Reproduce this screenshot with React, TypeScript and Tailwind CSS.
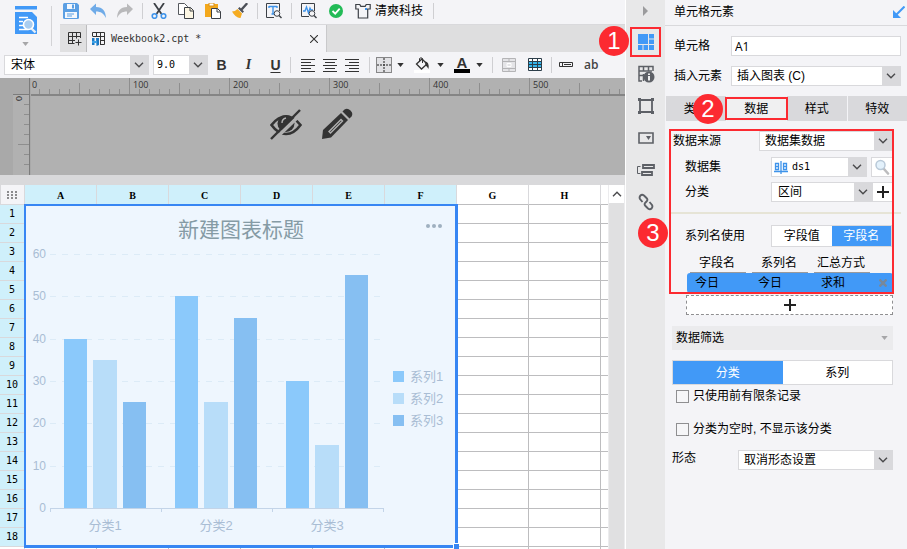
import type { ReactNode } from 'react'

const MONO = "[font-family:'DejaVu_Sans_Mono','Noto_Sans_CJK_SC',monospace]"

function Chevron({ className = '' }: { className?: string }) {
  return (
    <svg viewBox="0 0 10 6" className={`h-1.5 w-2.5 ${className}`} fill="none" stroke="#4a4a4c" strokeWidth="1.4">
      <path d="M1 .8 5 4.8 9 .8" />
    </svg>
  )
}

function Caret({ className = 'text-[#333]' }: { className?: string }) {
  return (
    <svg viewBox="0 0 8 5" className={`h-1 w-[7px] ${className}`} fill="currentColor">
      <path d="M0 0h8L4 5z" />
    </svg>
  )
}

type PickerProps = {
  label: string
  value: string
  className?: string
  selectClassName?: string
  icon?: ReactNode
}

function Picker({ label, value, className = '', selectClassName = 'pl-1.5', icon }: PickerProps) {
  return (
    <span className={`relative block h-5 border border-[#d9d9dc] bg-white ${className}`}>
      {icon && <span className="absolute top-[3px] left-0.5">{icon}</span>}
      <select aria-label={label} className={`block h-full w-full appearance-none bg-transparent pr-5 text-xs leading-4 text-black ${selectClassName}`}>
        <option>{value}</option>
      </select>
      <span className="pointer-events-none absolute inset-y-0 right-0 flex w-[18px] items-center justify-center bg-[#d9d9dc]">
        <Chevron />
      </span>
    </span>
  )
}

function Marker({ n, className }: { n: number; className: string }) {
  return (
    <span className={`pointer-events-none absolute z-20 flex size-[30px] items-center justify-center rounded-full bg-[#fc2a31] text-2xl leading-none text-white ${className}`}>
      {n}
    </span>
  )
}

function ToolButton({ label, children }: { label: string; children: ReactNode }) {
  return (
    <button aria-label={label} className="flex size-4 items-center justify-center">
      {children}
    </button>
  )
}

function Divider({ className = '' }: { className?: string }) {
  return <span className={`h-4 w-px bg-[#cfcfd2] ${className}`} />
}

const svg16 = { viewBox: '0 0 16 16', className: 'size-4 shrink-0', fill: 'none' }

function TopToolbar() {
  return (
    <div className="flex h-[25px] items-center border-b border-[#d9d9dc] pb-0.5">
      <div className="flex gap-[11px] pr-[9px] pl-[3px]">
        <ToolButton label="保存">
          <svg {...svg16}>
            <path d="M0 1.500Q0 0 1.500 0H14l2 2v12.500q0 1.500-1.500 1.500h-13Q0 16 0 14.500z" fill="#5b9fe3" />
            <path d="M4 1h8v5H4zM2 9h12v6H2z" fill="#f4f8fd" />
            <path d="M9 1.500h2v4H9z" fill="#5b9fe3" />
            <path d="M4 11h7M4 13h5" stroke="#5b9fe3" />
          </svg>
        </ToolButton>
        <ToolButton label="撤销">
          <svg {...svg16}>
            <path d="M0 6 6 .5V4c7 0 9.500 4 10 11C13.500 10.500 11 8.500 6 8.500V12z" fill="#6fabe8" />
          </svg>
        </ToolButton>
        <ToolButton label="重做">
          <svg {...svg16}>
            <path d="M16 6 10 .5V4C3 4 .5 8 0 15c2.500-4.500 5-6.500 10-6.500V12z" fill="#b9b9bb" />
          </svg>
        </ToolButton>
      </div>
      <Divider />
      <div className="flex gap-[11px] pr-[9px] pl-2">
        <ToolButton label="剪切">
          <svg {...svg16}>
            <path d="M3 0l7.500 11M13 0 5.500 11" stroke="#3c4046" strokeWidth="1.800" />
            <circle cx="3.500" cy="13" r="2.300" stroke="#3e93ea" strokeWidth="1.600" />
            <circle cx="12.500" cy="13" r="2.300" stroke="#3e93ea" strokeWidth="1.600" />
          </svg>
        </ToolButton>
        <ToolButton label="复制">
          <svg {...svg16}>
            <path d="M.5.5h6l3 3v8h-9z" fill="#fff" stroke="#55585d" />
            <path d="M6.500 4.500h6l3 3v8h-9z" fill="#fdf7e4" stroke="#3c4046" />
            <path d="M12 4.500V8h3.500" stroke="#3c4046" />
          </svg>
        </ToolButton>
        <ToolButton label="粘贴">
          <svg {...svg16}>
            <path d="M0 1h13v13H0z" fill="#f3a81c" />
            <path d="M4 0h5v3H4z" fill="#fff" stroke="#d9911a" />
            <path d="M6.500 5.500h6l3 3v7h-9z" fill="#fff" stroke="#3c4046" />
            <path d="M12 5.500V9h3.500" stroke="#3c4046" />
          </svg>
        </ToolButton>
        <ToolButton label="格式刷">
          <svg {...svg16}>
            <path d="M14.500 1 10 6" stroke="#4d5058" strokeWidth="2.400" strokeLinecap="round" />
            <path d="m7.500 4 4.500 4.500-1.500 1.500L6 5.500z" fill="#4d5058" />
            <path d="m5.500 6 4.500 4.500-1.500 4.500Q4 15.500 0 8.500 3 8.500 5.500 6z" fill="#f5ac22" />
          </svg>
        </ToolButton>
      </div>
      <Divider />
      <div className="flex pr-[9px] pl-2">
        <ToolButton label="模板预览">
          <svg {...svg16}>
            <path d="M8 14.500H.5V.5h13V8" stroke="#3c4046" />
            <path d="M3 3.500h8M7 3.500V11M3 3v2M11 3v2M5.500 11h3" stroke="#3e93ea" strokeWidth="1.400" />
            <circle cx="11" cy="10.500" r="2.800" fill="#f4f4f7" stroke="#3c4046" />
            <path d="m13 12.500 2.500 2.500" stroke="#3c4046" strokeWidth="1.400" />
          </svg>
        </ToolButton>
      </div>
      <Divider />
      <div className="flex items-center gap-[11px] pr-[10px] pl-[9px]">
        <ToolButton label="性能分析">
          <svg {...svg16}>
            <path d="M8 13.500H.5V.5h13V8" stroke="#3c4046" />
            <path d="M2 8h2l1.500-4L7.500 10 9 5l1 2h2" stroke="#3e93ea" strokeWidth="1.300" />
            <circle cx="11" cy="10.500" r="2.800" fill="#f4f4f7" stroke="#3c4046" />
            <path d="m13 12.500 2.500 2.500" stroke="#3c4046" strokeWidth="1.400" />
          </svg>
        </ToolButton>
        <ToolButton label="检测">
          <svg {...svg16}>
            <circle cx="8" cy="8" r="7" fill="#23bb57" />
            <path d="m4.500 8 2.700 2.700 4.500-5" stroke="#fff" strokeWidth="1.800" />
          </svg>
        </ToolButton>
        <button className="flex items-center gap-1 text-xs leading-4 whitespace-nowrap">
          <svg {...svg16}>
            <path d="M.8 1.500h4l1 1.800h4.400l1-1.800h4v4.500h-2.500v9H3.300V6H.8z" stroke="#3c4046" strokeWidth="1.200" />
            <path d="M10 5h2v2h-2z" fill="#3e93ea" />
          </svg>
          清爽科技
        </button>
      </div>
      <Divider />
    </div>
  )
}

function FileTabs() {
  return (
    <div className="flex h-[27px] bg-[#dededf]">
      <button aria-label="新建" className="flex w-[27px] items-center justify-center border-r border-[#bcbcbe] bg-[#e0e0e1] pl-1">
        <svg {...svg16}>
          <path d="M1.500 13V1.500h12V7M1.500 5.500h12M5.500 1.500v11M9.500 1.500v6M1.500 9.500H8M1.500 12.500h6M11.500 8.500v6M8.500 11.500h6" stroke="#333" />
        </svg>
      </button>
      <div className="flex w-60 items-center border-r border-[#c9c9cb] bg-[#f4f4f7] pr-1.5 pl-1">
        <svg {...svg16}>
          <path d="M1.500 5V1.500h12v12H9M1.500 5.500h12M5.500 1.500v4M9.500 1.500v12M9 9.500h4.500" stroke="#333" />
          <path d="M1 7h2.500v7H1zM5 7h3v7L5.500 15z" fill="#1c79c4" />
          <path d="M1 10h5v2H1z" fill="#3ca2e8" />
        </svg>
        <span className={`ml-1 flex-1 text-[10px] text-[#333] ${MONO}`}>Weekbook2.cpt *</span>
        <button aria-label="关闭" className="p-0.5">
          <svg viewBox="0 0 8 8" className="size-2" stroke="#333" strokeWidth="1.100">
            <path d="m0 0 8 8M8 0 0 8" />
          </svg>
        </button>
      </div>
    </div>
  )
}

function FormatBar() {
  return (
    <div className="flex h-[26px] items-center overflow-hidden pl-1">
      <Picker label="字体" value="宋体" className="w-[145px]" selectClassName="pl-1.5" />
      <Picker label="字号" value="9.0" className={`ml-1 w-[55px] ${MONO}`} selectClassName="pl-[3px] text-[10px]" />
      <div className="flex text-sm leading-4 text-[#333]">
        <button className="w-[27px] font-bold">B</button>
        <button className="w-[27px] font-bold italic [font-family:'Liberation_Serif',serif]">I</button>
        <button className="w-[27px] font-bold underline underline-offset-2">U</button>
      </div>
      <Divider className="mr-[9px] ml-px" />
      <div className="flex gap-1.5 text-[#333]">
        <ToolButton label="左对齐">
          <svg {...svg16} stroke="currentColor">
            <path d="M1 2.500h14M1 5.500h10M1 8.500h14M1 11.500h10M1 14.500h14" />
          </svg>
        </ToolButton>
        <ToolButton label="居中">
          <svg {...svg16} stroke="currentColor">
            <path d="M1 2.500h14M3 5.500h10M1 8.500h14M3 11.500h10M1 14.500h14" />
          </svg>
        </ToolButton>
        <ToolButton label="右对齐">
          <svg {...svg16} stroke="currentColor">
            <path d="M1 2.500h14M5 5.500h10M1 8.500h14M5 11.500h10M1 14.500h14" />
          </svg>
        </ToolButton>
      </div>
      <Divider className="mr-1.5 ml-[9px]" />
      <button aria-label="边框" className="flex items-center gap-[5px]">
        <svg {...svg16} stroke="#222">
          <path d="M.5.5h15v15H.5z" fill="#e2e2e5" strokeDasharray="1 1" />
          <path d="M8 1v14M1 8h14" strokeDasharray="2 1" />
        </svg>
        <Caret />
      </button>
      <button aria-label="填充颜色" className="ml-2.5 flex items-center gap-[7px]">
        <svg {...svg16}>
          <path d="M0 13h16v3H0z" fill="#fff" />
          <path d="M2.500 7 8 2l5 5-5.500 5z" fill="#f4f4f7" stroke="#333" strokeWidth="1.300" />
          <path d="M5.500 5V1.500Q7 0 8.500 1.500V6" stroke="#333" />
          <path d="M11 4.500q4.500 0 3.500 7.500-1.500-3-3-3.500z" fill="#333" />
        </svg>
        <Caret />
      </button>
      <button aria-label="字体颜色" className="ml-2.5 flex items-center gap-1.5">
        <span className="flex w-4 flex-col items-center">
          <span className="text-[15px] leading-3 font-bold text-[#333]">A</span>
          <span className="h-1 w-full bg-black" />
        </span>
        <Caret />
      </button>
      <Divider className="mr-2 ml-[9px]" />
      <div className="flex gap-2.5">
        <ToolButton label="合并单元格">
          <svg {...svg16} stroke="#b4b4b6">
            <path d="M1.500 1.500h13v13h-13z" fill="#e4e4e7" />
            <path d="M1.500 4.500h13M1.500 11.500h13M8 1.500v3M8 11.500v3" />
            <path d="M6 6.500h4v3H6z" stroke="#fff" />
          </svg>
        </ToolButton>
        <ToolButton label="条件格式">
          <svg {...svg16}>
            <path d="M1.500 1.500h13v12h-13z" fill="#fff" />
            <path d="M1 5h14v6H1z" fill="#35b4ea" />
            <path d="M1.500 1.500h13v12h-13zM1 4.500h14M1 7.500h14M1 10.500h14M5.500 1v13M10.500 1v13" stroke="#2c3e4a" />
          </svg>
        </ToolButton>
      </div>
      <Divider className="mr-1.5 ml-2" />
      <ToolButton label="控件">
        <svg {...svg16} stroke="#333">
          <path d="M1.500 5.500h13v4h-13zM4.500 5.500v4M6 7.500h7" />
        </svg>
      </ToolButton>
      <button className="ml-2.5 text-xs leading-4 font-semibold text-[#444] [font-family:'Open_Sans',sans-serif]">ab</button>
    </div>
  )
}

function RulerArea() {
  const ticks = Array.from({ length: 60 }, (_, i) => i)
  return (
    <div className="flex h-[97px] flex-none bg-[#b1b1b1] text-[#444]">
      <svg className="h-full w-[31px] flex-none bg-[#a9a9a9]">
        <path d="M13 17h17v80H13z" fill="#b1b1b1" />
        <path d="M13 16.500h17M29.500 0v97" stroke="#7c7c7c" />
        {[1, 2, 3, 4, 5, 6, 7].map((i) => (
          <path key={i} d={`M${i === 5 ? 18 : 24} ${16.5 + i * 10}H29`} stroke="#8e8e8e" />
        ))}
        <text transform="translate(22 23) rotate(-90)" fontSize="9" fill="#333">0</text>
      </svg>
      <div className="min-w-0 flex-1">
        <svg className="block h-[18px] w-full" stroke="#8e8e8e">
          {ticks.map((i) => (
            <path key={i} d={`M${i * 10 - 1.5} ${i % 10 === 0 ? 0 : i % 5 === 0 ? 5 : 11}V17`} />
          ))}
          <path d="M0 17h3000" stroke="#858585" strokeWidth="2" />
          {ticks.filter((i) => i % 10 === 0).map((i) => (
            <text key={i} x={i * 10 + (i ? 2 : 1)} y="10" fontSize="9" fill="#333" stroke="none" fontFamily="Open Sans">
              {i * 10}
            </text>
          ))}
        </svg>
        <div className="flex justify-center gap-[18px] pt-3 pr-[34px] text-[#333]">
          <button aria-label="隐藏">
            <svg viewBox="0 0 34 32" className="h-8 w-[34px]" fill="none">
              <path d="M2.500 17Q9 8.500 17 8.500T31.500 17Q25 26 17 26T2.500 17z" stroke="currentColor" strokeWidth="2.600" />
              <circle cx="17" cy="15.500" r="8.500" fill="currentColor" />
              <path d="M13 15q0-4 4-5" stroke="#b1b1b1" strokeWidth="1.400" />
              <path d="M4 33 34 4" stroke="#b1b1b1" strokeWidth="3.500" />
              <path d="M2 31 31 2" stroke="currentColor" strokeWidth="2.400" />
            </svg>
          </button>
          <button aria-label="编辑">
            <svg viewBox="0 0 32 32" className="size-8">
              <path d="m1 31 1-9L20 5l7 7L10 29.500z" fill="currentColor" />
              <path d="m21.500 3.500 2-2q3-2 6 1t1 6l-2 2z" fill="currentColor" />
              <path d="M8 23.500 20 11.500l1.500 1.500L9.500 25z" fill="currentColor" stroke="#b1b1b1" strokeWidth="1.400" />
            </svg>
          </button>
        </div>
      </div>
    </div>
  )
}

const SERIES = [
  { name: '系列1', color: '#8bc9fb', values: [40, 50, 30] },
  { name: '系列2', color: '#b8ddf9', values: [35, 25, 15] },
  { name: '系列3', color: '#86bff2', values: [25, 45, 55] },
]

function Chart() {
  const y = (v: number) => Math.round(303 - v * 4.233)
  return (
    <svg className="block h-[342px] w-[432px] bg-[#eef6fe]" fontSize="13" fill="#a9bdd4">
      <text x="216" y="32" fontSize="21" textAnchor="middle" fill="#859ba5">新建图表标题</text>
      {[0, 1, 2].map((i) => (
        <circle key={i} cx={403 + i * 6} cy="21" r="2" fill="#9fb0c0" />
      ))}
      {[0, 10, 20, 30, 40, 50, 60].map((v) => (
        <g key={v}>
          <text x="21" y={y(v) + 4} fontSize="12" textAnchor="end">{v}</text>
          {v > 0 && <path d={`M25 ${y(v) + 0.5}H358`} stroke="#dcebf7" strokeDasharray="6 6" />}
        </g>
      ))}
      {SERIES.map((s, si) =>
        s.values.map((v, ci) => (
          <rect key={`${si}-${ci}`} x={39 + ci * 111 + [0, 29, 59][si]} y={y(v)} width={si === 1 ? 24 : 23} height={303 - y(v)} fill={s.color} />
        )),
      )}
      <path d="M25 303.500h334M25.500 303v4M136.500 303v4M247.500 303v4M358.500 303v4" stroke="#c3d4e8" />
      {['分类1', '分类2', '分类3'].map((c, i) => (
        <text key={c} x={80 + i * 111} y="325" textAnchor="middle">{c}</text>
      ))}
      {SERIES.map((s, i) => (
        <g key={s.name}>
          <rect x="368" y={166 + i * 22} width="11" height="11" fill={s.color} />
          <text x="385" y={176 + i * 22}>{s.name}</text>
        </g>
      ))}
    </svg>
  )
}

function Sheet() {
  const rows = Array.from({ length: 19 }, (_, i) => i + 1)
  const cell = 'border-r border-b border-[#bdbdbf] bg-white p-0'
  const letter = "border-r border-b border-r-[#d9d9dc] p-0 pt-0.5 text-[10px] font-bold [font-family:'Liberation_Serif',serif]"
  return (
    <div className="flex min-h-0 flex-1 overflow-hidden">
      <div className="min-w-0 flex-1 overflow-hidden bg-white">
        <table className="w-full table-fixed border-separate border-spacing-0 text-[11px] leading-none text-black">
          <colgroup>
            <col className="w-[25px]" />
            {[...'ABCDEFGH'].map((c) => (
              <col key={c} className="w-[72px]" />
            ))}
            <col />
          </colgroup>
          <thead>
            <tr className="h-5">
              <td className="border-r border-b border-l border-[#d9d9dc] bg-[#f4f4f7] p-0">
                <svg viewBox="0 0 11 8" className="mx-auto h-2 w-[11px]" fill="#8c8c8e">
                  {[0, 1, 2].flatMap((r) => [0, 1, 2].map((c) => <rect key={`${r}${c}`} x={c * 4} y={r * 3} width="2" height="2" />))}
                </svg>
              </td>
              {[...'ABCDEF'].map((c) => (
                <th key={c} className={`border-b-[#d9d9dc] bg-[#cff0fb] ${letter}`}>{c}</th>
              ))}
              {[...'GH'].map((c) => (
                <th key={c} className={`border-b-[#bdbdbf] bg-white ${letter}`}>{c}</th>
              ))}
              <th className="border-b border-[#bdbdbf] bg-white p-0" />
            </tr>
          </thead>
          <tbody>
            {rows.map((n) => (
              <tr key={n} className="h-[19px]">
                <th className={`border-r border-b border-[#d9d9dc] p-0 text-[10px] font-normal ${MONO} ${n < 19 ? 'bg-[#cff0fb]' : 'bg-white'}`}>{n < 19 && n}</th>
                {n === 1 && (
                  <td colSpan={6} rowSpan={18} className="relative p-0">
                    <Chart />
                    <span className="absolute -inset-px border-2 border-r-3 border-b-3 border-[#3786f3]" />
                    <span className="absolute -right-0.5 -bottom-0.5 size-1.5 border-t border-l border-white bg-[#3786f3]" />
                  </td>
                )}
                {n === 19 && [...'ABCDEF'].map((c) => <td key={c} className={cell} />)}
                <td className={cell} />
                <td className={cell} />
                <td className="border-b border-[#bdbdbf] bg-white p-0" />
              </tr>
            ))}
          </tbody>
        </table>
      </div>
      <div className="w-[17px] flex-none border-x border-[#ececee] bg-[#e0e0e1]">
        <button aria-label="向上滚动" className="flex h-[18px] w-full items-center justify-center bg-white">
          <Chevron className="rotate-180" />
        </button>
      </div>
    </div>
  )
}

const svgRail = { viewBox: '0 0 18 18', className: 'size-[18px]', fill: 'none', stroke: '#5d6066' }

function Rail() {
  const item = 'relative flex h-8 w-full items-center justify-center'
  return (
    <nav className="flex w-10 flex-none flex-col items-center border-l border-white bg-[#e8e8e9]">
      <button aria-label="收起" className="flex h-[26px] w-full items-center justify-center pb-1">
        <svg viewBox="0 0 5 10" className="h-2.5 w-[5px]" fill="#9b9b9d">
          <path d="M0 0v10l5-5z" />
        </svg>
      </button>
      <button aria-label="单元格元素" className={item}>
        <svg viewBox="0 0 16 16" className="size-4" fill="#4199f7">
          <path d="M0 0h10v10H0zM11 0h5v4.500h-5zM11 5.500h5V10h-5zM0 11h4.500v5H0zM5.500 11H10v5H5.500zM11 11h5v5h-5z" />
        </svg>
        <span className="absolute inset-x-1 inset-y-px border-2 border-[#fc2a31]" />
        <Marker n={1} className="top-0 right-9" />
      </button>
      <button aria-label="单元格属性" className={item}>
        <svg {...svgRail}>
          <path d="M5 16H2V1.500h14V6M2 6h13M6.500 1v5M11.500 1v5M6.500 9v7M2 10.500h4" strokeWidth="1.500" />
          <circle cx="12" cy="12" r="5.500" fill="#5d6066" stroke="none" />
          <path d="M12 11v4.500M12 8.500v1.500" stroke="#fff" strokeWidth="1.800" />
        </svg>
      </button>
      <button aria-label="悬浮元素" className={item}>
        <svg {...svgRail}>
          <path d="M3 3h12v12H3z" strokeWidth="1.800" />
          <path d="M1 1h3v3H1zM14 1h3v3h-3zM1 14h3v3H1zM14 14h3v3h-3z" fill="#5d6066" stroke="none" />
        </svg>
      </button>
      <button aria-label="控件设置" className={item}>
        <svg {...svgRail}>
          <path d="M2 4h14v10H2z" strokeWidth="1.600" />
          <path d="M9 7h5l-2.500 4z" fill="#5d6066" stroke="none" />
        </svg>
      </button>
      <button aria-label="条件属性" className={item}>
        <svg {...svgRail}>
          <path d="M6 4h11v3H6zM5 11h10v3H5z" strokeWidth="1.800" />
          <path d="M3.500 5.500h-3v7h3" />
        </svg>
      </button>
      <button aria-label="超级链接" className={item}>
        <svg {...svgRail}>
          <path d="M8.500 9.500 10 8Q11 6.500 9.500 5L7 2.500Q5 1 3.500 2.500T3 6l2.500 3M9.500 8.500 8 10q-1 1.500.5 3l2.500 2.500q2 1.500 3.500 0t.5-3.500L12.500 9" strokeWidth="1.900" />
        </svg>
      </button>
    </nav>
  )
}

function DataSection() {
  return (
    <section className="relative mt-2.5 pr-3.5 pl-2 text-xs leading-4">
      <span className="pointer-events-none absolute inset-x-1 -top-0.5 right-[13px] -bottom-px z-10 border-2 border-[#fc2a31]" />
      <Marker n={3} className="-left-[27px] top-[87px]" />

      <div className="flex items-center justify-between">
        <span>数据来源</span>
        <Picker label="数据来源" value="数据集数据" className="w-[134px]" selectClassName="pl-[5px]" />
      </div>
      <div className="mt-1.5 flex items-center pl-3">
        <span className="w-[86px]">数据集</span>
        <Picker
          label="数据集"
          value="ds1"
          className={`w-24 ${MONO}`}
          selectClassName="pl-5 text-[10px]"
          icon={
            <svg viewBox="0 0 14 13" className="h-[13px] w-3.5" fill="none" stroke="#3e93ea">
              <path d="M1.500 2.500h3v6h-3zM9.500 2.500h3v6h-3zM1 5.500h4M9 5.500h4M0 10.500h14M7 0v13" strokeWidth="1.300" />
            </svg>
          }
        />
        <button aria-label="预览数据集" className="ml-1 flex h-5 flex-1 items-center justify-center border border-[#d9d9dc] bg-white">
          <svg {...svg16}>
            <path d="m9.500 9.500 4.500 5" stroke="#bcbcbe" strokeWidth="2.600" strokeLinecap="round" />
            <circle cx="6.500" cy="6" r="4.500" fill="#e3f1fb" stroke="#b9c9d8" strokeWidth="1.500" />
          </svg>
        </button>
      </div>
      <div className="mt-[5px] flex items-center pl-3">
        <span className="w-[86px]">分类</span>
        <Picker label="分类" value="区间" className="w-[102px]" />
        <button aria-label="添加分类" className="flex h-5 flex-1 items-center justify-center border-y border-[#d9d9dc] bg-white">
          <svg viewBox="0 0 12 12" className="size-3" stroke="#222" strokeWidth="2">
            <path d="M6 0v12M0 6h12" />
          </svg>
        </button>
      </div>
      <hr className="mt-2.5 -mr-2 -ml-1 border-t-2 border-[#e6e4d6]" />
      <div className="mt-[11px] flex items-center pl-3">
        <span className="w-[86px]">系列名使用</span>
        <div className="flex h-[22px] flex-1 border border-r-2 border-[#d9d9dc]">
          <button className="flex-1 bg-white">字段值</button>
          <button className="flex-1 bg-[#4199f7] text-white">字段名</button>
        </div>
      </div>
      <table className="mt-1.5 ml-3.5 w-[206px] table-fixed border-separate border-spacing-0">
        <thead>
          <tr className="h-5">
            {['字段名', '系列名', '汇总方式'].map((h) => (
              <th key={h} className="w-[62px] p-0 font-normal">
                <span className="mx-[3px] block border-b border-[#9a9a9c] pr-0.5 leading-[18px] whitespace-nowrap">{h}</span>
              </th>
            ))}
            <td />
          </tr>
        </thead>
        <tbody>
          <tr className="h-5">
            <td className="rounded-l-[3px] bg-[#4199f7] p-0 pl-2">今日</td>
            <td className="bg-[#4199f7] p-0 pl-[9px]">今日</td>
            <td className="bg-[#4199f7] p-0 pl-[10px]">求和</td>
            <td className="rounded-r-[3px] bg-[#4199f7] p-0">
              <button aria-label="删除" className="flex w-full justify-center">
                <svg viewBox="0 0 8 8" className="size-2" stroke="#77889b" strokeWidth="2.400">
                  <path d="m.5.5 7 7M7.500.5l-7 7" />
                </svg>
              </button>
            </td>
          </tr>
        </tbody>
      </table>
    </section>
  )
}

function Panel() {
  return (
    <aside className="w-[242px] flex-none text-xs leading-4">
      <header className="flex h-[26px] items-center justify-between border-b border-[#d9d9dc] pr-0.5 pb-0.5 pl-[9px]">
        <h2>单元格元素</h2>
        <button aria-label="弹出">
          <svg viewBox="0 0 12 12" className="size-3" fill="none" stroke="#4199f7" strokeWidth="2">
            <path d="M11.500.5 3 9" />
            <path d="M0 4v8h8z" fill="#4199f7" stroke="none" />
          </svg>
        </button>
      </header>
      <div className="mt-2.5 flex items-center pr-1.5 pl-[9px]">
        <label htmlFor="cell" className="w-[57px]">单元格</label>
        <input id="cell" defaultValue="A1" className="h-5 min-w-0 flex-1 border border-[#d9d9dc] bg-white pl-[3px] text-xs [font-family:'Open_Sans',sans-serif]" />
      </div>
      <div className="mt-2.5 flex items-center pr-1.5 pl-[9px]">
        <span className="w-[57px]">插入元素</span>
        <Picker label="插入元素" value="插入图表 (C)" className="flex-1" selectClassName="pl-[5px]" />
      </div>
      <div className="mt-2.5 flex h-[25px] gap-px pl-px">
        <button className="flex-1 bg-[#d9d9dc]">类型</button>
        <button className="relative flex-1 bg-[#f0f0f1]">
          数据
          <span className="absolute -inset-x-0.5 inset-y-px border-2 border-[#fc2a31]" />
          <Marker n={2} className="-top-0.5 right-[63px]" />
        </button>
        <button className="flex-1 bg-[#d9d9dc]">样式</button>
        <button className="flex-1 bg-[#d9d9dc]">特效</button>
      </div>

      <DataSection />

      <div className="pr-3.5 pl-[7px]">
        <button aria-label="添加字段" className="ml-3.5 mt-0.5 flex h-5 w-[207px] items-center justify-center border border-dashed border-[#8f8f91] bg-white">
          <svg viewBox="0 0 12 12" className="size-3" stroke="#222" strokeWidth="2">
            <path d="M6 0v12M0 6h12" />
          </svg>
        </button>
        <button className="mt-[11px] flex h-6 w-full items-center justify-between bg-[#ebebed] pr-[5px] pl-1">
          数据筛选
          <Caret className="text-[#a6a6a8]" />
        </button>
        <div className="mt-2.5 flex h-[25px] border border-[#d9d9dc]">
          <button className="flex-1 bg-[#4199f7] text-white">分类</button>
          <button className="flex-1 bg-white">系列</button>
        </div>
        <label className="mt-[3px] flex h-4 items-center gap-1 pl-1">
          <input type="checkbox" className="size-[13px] appearance-none border border-[#8f8f91] bg-[#f6f6f8]" />
          只使用前有限条记录
        </label>
        <label className="mt-[17px] flex h-4 items-center gap-1 pl-1">
          <input type="checkbox" className="size-[13px] appearance-none border border-[#8f8f91] bg-[#f6f6f8]" />
          分类为空时, 不显示该分类
        </label>
        <div className="mt-[13px] flex items-start justify-between">
          <span>形态</span>
          <Picker label="形态" value="取消形态设置" className="w-[155px]" selectClassName="pl-[5px]" />
        </div>
      </div>
    </aside>
  )
}

export default function App() {
  return (
    <div className="flex h-screen overflow-hidden bg-[#f4f4f7] text-black [font-family:'Liberation_Sans','Noto_Sans_CJK_SC',sans-serif]">
      <main className="flex min-w-0 flex-1 flex-col">
        <div className="flex flex-none">
          <div className="flex w-[60px] flex-none items-start pt-1.5">
            <button aria-label="模板" className="flex w-[51px] flex-col items-center gap-2">
              <svg viewBox="0 0 22 28" className="h-7 w-[22px]" fill="none">
                <path d="M0 0h22v3.500H0zM0 6h17l5 5v17H0z" fill="#4199f7" />
                <path d="M4 11.500h9M4 15.500h4M4 19.500h4M4 23.500h9" stroke="#fff" strokeWidth="1.400" />
                <path d="m16.500 22.500 4 4" stroke="#e8eef5" strokeWidth="2.400" />
                <circle cx="13.500" cy="18.500" r="5" fill="#a9cdf0" stroke="#fff" strokeWidth="1.600" />
              </svg>
              <Caret className="text-[#a6a6a8]" />
            </button>
            <span className="h-10 w-px bg-[#d3d3d6]" />
          </div>
          <div className="min-w-0 flex-1">
            <TopToolbar />
            <FileTabs />
          </div>
        </div>
        <FormatBar />
        <RulerArea />
        <div className="h-2.5 flex-none bg-[#d9d9db]" />
        <Sheet />
      </main>
      <Rail />
      <Panel />
    </div>
  )
}
